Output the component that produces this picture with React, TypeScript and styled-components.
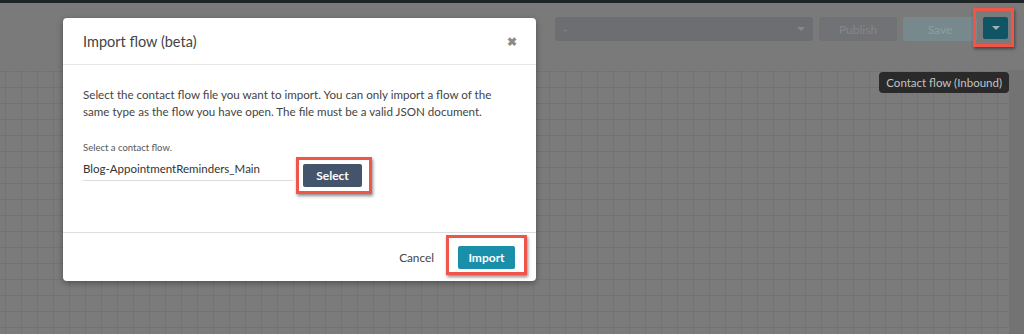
import React from 'react';
import styled, { createGlobalStyle } from 'styled-components';

const GlobalStyle = createGlobalStyle`
  html, body {
    margin: 0;
    padding: 0;
    background: #7a7a7a;
  }
  body {
    font-family: Lato, "Open Sans", "Liberation Sans", sans-serif;
  }
`;

const red = '#ef5548';

const Page = styled.div`
  position: relative;
  width: 1024px;
  height: 334px;
  overflow: hidden;
  display: flex;
  flex-direction: column;
  background: #7a7a7a;
`;

const TopStrip = styled.div`
  height: 3px;
  background: #1f2427;
`;

const Toolbar = styled.div`
  height: 67px;
  display: flex;
  align-items: flex-start;
  justify-content: flex-end;
  padding: 14px 16px 0 0;
  box-sizing: border-box;
  gap: 6px;
`;

const Dropdown = styled.div`
  width: 258px;
  height: 24px;
  border-radius: 3px;
  background: #6c6e71;
  display: flex;
  align-items: center;
  justify-content: space-between;
  padding: 0 8px;
  box-sizing: border-box;
  color: #85878a;
  font-size: 12px;
`;

const Caret = styled.span`
  width: 0;
  height: 0;
  border-left: 4px solid transparent;
  border-right: 4px solid transparent;
  border-top: 4px solid ${p => p.color || '#85878a'};
`;

const ToolButton = styled.div<{ $w: number; $bg: string; $fg: string }>`
  width: ${p => p.$w}px;
  height: 24px;
  border-radius: 3px;
  background: ${p => p.$bg};
  color: ${p => p.$fg};
  font-size: 12px;
  display: flex;
  align-items: center;
  justify-content: center;
`;

const Spot = styled.div<{ $top?: number }>`
  position: relative;
  display: flex;
  margin-top: ${p => p.$top || 0}px;
`;

const Highlight = styled.div<{ $t: number; $r: number; $b: number; $l: number }>`
  position: absolute;
  top: -${p => p.$t}px;
  right: -${p => p.$r}px;
  bottom: -${p => p.$b}px;
  left: -${p => p.$l}px;
  border: 3px solid ${red};
  box-shadow: 1px 2px 3px rgba(0, 0, 0, 0.45);
  pointer-events: none;
`;

const HighlightLight = styled(Highlight)`
  background: #ffffff;
  z-index: 0;
`;

const ArrowButton = styled.div`
  width: 25px;
  height: 22px;
  border-radius: 2px;
  background: #0f5566;
  display: flex;
  align-items: center;
  justify-content: center;
`;

const CanvasRow = styled.div`
  flex: 1;
  display: flex;
`;

const Grid = styled.div`
  flex: 1;
  position: relative;
  background-color: #7b7b7b;
  background-image:
    linear-gradient(to right, #737373 1px, transparent 1px),
    linear-gradient(to bottom, #737373 1px, transparent 1px);
  background-size: 16px 16px;
  background-position: 5px 1px;
`;

const SideStrip = styled.div`
  width: 15px;
  background: #737373;
`;

const Tooltip = styled.div`
  position: absolute;
  top: 2px;
  right: 0;
  height: 21px;
  padding: 0 7px;
  border-radius: 4px;
  background: #2a2a2a;
  color: #c4c4c4;
  font-size: 11.5px;
  display: flex;
  align-items: center;
`;

const Modal = styled.div`
  position: absolute;
  top: 18px;
  left: 63px;
  width: 473px;
  height: 263px;
  background: #ffffff;
  border-radius: 4px;
  box-shadow: 0 2px 6px rgba(0, 0, 0, 0.35);
  display: flex;
  flex-direction: column;
  color: #444;
`;

const ModalHeader = styled.div`
  height: 46px;
  border-bottom: 1px solid #e6e6e6;
  display: flex;
  align-items: center;
  justify-content: space-between;
  padding: 0 19px 0 20px;
  font-size: 14.5px;
`;

const Close = styled.span`
  color: #8a8a8a;
  font-size: 12px;
  font-weight: bold;
`;

const ModalBody = styled.div`
  flex: 1;
  padding: 21px 20px 0 20px;
  font-size: 11.6px;
  line-height: 17px;
`;

const Intro = styled.p`
  margin: 0 0 22px 0;
`;

const Label = styled.div`
  font-size: 9.5px;
  line-height: 12px;
  color: #555;
`;

const FieldRow = styled.div`
  display: flex;
  align-items: flex-start;
  gap: 10px;
  margin-top: 6px;
`;

const FileField = styled.div`
  width: 210px;
  height: 20px;
  border-bottom: 1px solid #dcdcdc;
  font-size: 11.5px;
  line-height: 18px;
  color: #333;
`;

const SolidButton = styled.div<{ $w: number; $bg: string }>`
  position: relative;
  z-index: 1;
  width: ${p => p.$w}px;
  height: 23px;
  border-radius: 2px;
  background: ${p => p.$bg};
  color: #fff;
  font-size: 12px;
  font-weight: bold;
  display: flex;
  align-items: center;
  justify-content: center;
`;

const ModalFooter = styled.div`
  height: 48px;
  border-top: 1px solid #dedede;
  display: flex;
  align-items: center;
  justify-content: flex-end;
  padding-right: 21px;
  gap: 24px;
  font-size: 11.8px;
  color: #444;
`;

export default function App() {
  return (
    <>
      <GlobalStyle />
      <Page>
        <TopStrip />
        <Toolbar>
          <Dropdown>
            <span>-</span>
            <Caret />
          </Dropdown>
          <ToolButton $w={78} $bg="#707275" $fg="#85878a">Publish</ToolButton>
          <ToolButton $w={74} $bg="#77898d" $fg="#8d9ea2">Save</ToolButton>
          <Spot>
            <ArrowButton>
              <Caret color="#9fb3b8" />
            </ArrowButton>
            <Highlight $t={9} $r={6} $b={8} $l={10} />
          </Spot>
        </Toolbar>
        <CanvasRow>
          <Grid>
            <Tooltip>Contact flow (Inbound)</Tooltip>
          </Grid>
          <SideStrip />
        </CanvasRow>
        <Modal>
          <ModalHeader>
            <span>Import flow (beta)</span>
            <Close>✖</Close>
          </ModalHeader>
          <ModalBody>
            <Intro>
              Select the contact flow file you want to import. You can only import a flow of the
              <br />
              same type as the flow you have open. The file must be a valid JSON document.
            </Intro>
            <Label>Select a contact flow.</Label>
            <FieldRow>
              <FileField>Blog-AppointmentReminders_Main</FileField>
              <Spot $top={4}>
                <SolidButton $w={59} $bg="#44546a">Select</SolidButton>
                <HighlightLight $t={7} $r={10} $b={7} $l={7} />
              </Spot>
            </FieldRow>
          </ModalBody>
          <ModalFooter>
            <span>Cancel</span>
            <Spot>
              <SolidButton $w={57} $bg="#1a8fa9">Import</SolidButton>
              <HighlightLight $t={11} $r={12} $b={6} $l={12} />
            </Spot>
          </ModalFooter>
        </Modal>
      </Page>
    </>
  );
}
